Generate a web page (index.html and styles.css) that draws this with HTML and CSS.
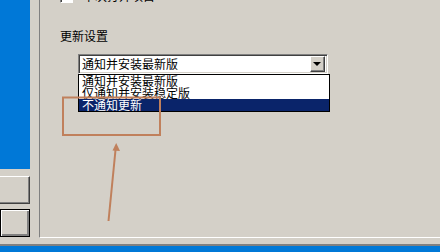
FILE: index.html
```html
<!DOCTYPE html>
<html lang="zh">
<head>
  <meta charset="UTF-8">
  <title>更新设置</title>
  <link rel="stylesheet" href="styles.css">
</head>
<body>
  <div class="window">
    <div class="top">
      <div class="side">
        <div class="side-blue"></div>
        <div class="btn"></div>
        <div class="btn btn-default"></div>
      </div>
      <div class="panel">
        <div class="check-row">
          <span class="check"></span>
          <span>下次打开项目</span>
        </div>
        <div class="label">更新设置</div>
        <div class="combo">
          <div class="combo-text">通知并安装最新版</div>
          <div class="combo-btn"><span class="tri"></span></div>
        </div>
        <ul class="list">
          <li>通知并安装最新版</li>
          <li>仅通知并安装稳定版</li>
          <li class="sel">不通知更新</li>
        </ul>
      </div>
    </div>
    <div class="bottom"></div>
    <div class="taskbar"></div>

    <!-- 标注 -->
    <svg class="mark" width="440" height="252" viewBox="0 0 440 252">
      <rect x="63" y="97.5" width="97" height="37.5" fill="none" stroke="#c0805c" stroke-width="2"/>
      <line x1="108.5" y1="221" x2="115.5" y2="150" stroke="#c0805c" stroke-width="2"/>
      <path d="M116.2 143 L120 151 L112.5 150.5 Z" fill="#c0805c"/>
    </svg>
  </div>
</body>
</html>
```

FILE: styles.css
```css
* { box-sizing: border-box; }
body { margin: 0; background: #d4d0c8; font: 12px "Noto Sans CJK SC", "Liberation Sans", sans-serif; }

.window { position: relative; width: 440px; height: 252px; overflow: hidden; display: flex; flex-direction: column; }

.top { display: flex; height: 238px; }

.side { width: 30px; margin-right: 9px; display: flex; flex-direction: column; }
.side-blue { height: 169px; background: #0078d7; }
.btn {
  height: 28px; margin-top: 7px;
  border-top: 1px solid #fff;
  border-right: 1px solid #404040;
  border-bottom: 1px solid #404040;
  box-shadow: inset -1px -1px 0 #808080;
}
.btn-default { margin-top: 5px; border: 1px solid #000; box-shadow: inset 1px 1px 0 #fff, inset -2px -2px 0 #808080; }

.panel {
  flex: 1;
  border-left: 1px solid #808080;
  border-bottom: 1px solid #fff;
  padding-left: 20px;
}

.check-row { display: flex; align-items: center; gap: 10px; height: 16px; margin-top: -12px; line-height: 16px; }
.check { width: 13px; height: 13px; background: #fff; border-top: 1px solid #808080; border-left: 1px solid #808080; border-right: 1px solid #fff; border-bottom: 1px solid #fff; box-shadow: inset 1px 1px 0 #404040; }

.label { margin-top: 25px; line-height: 14px; height: 14px; }

.combo {
  display: flex; width: 250px; height: 20px; margin: 11px 0 0 18px;
  background: #fff;
  border-top: 1px solid #808080; border-left: 1px solid #808080;
  border-right: 1px solid #fff; border-bottom: 1px solid #fff;
  box-shadow: inset 1px 1px 0 #404040, inset -1px -1px 0 #d4d0c8;
}
.combo-text { flex: 1; padding: 2px 0 0 3px; line-height: 14px; }
.combo-btn {
  width: 15px; height: 16px; margin: 1px 2px 0 0;
  background: #d4d0c8;
  border-top: 1px solid #fff; border-left: 1px solid #fff;
  border-right: 1px solid #404040; border-bottom: 1px solid #404040;
  box-shadow: inset -1px -1px 0 #808080;
  display: flex; align-items: center; justify-content: center;
}
.tri { width: 0; height: 0; border-left: 4px solid transparent; border-right: 4px solid transparent; border-top: 4px solid #000; margin: 0 1px 1px 0; }

.list {
  list-style: none; margin: 0 0 0 18px; padding: 0;
  width: 252px; height: 38px;
  background: #fff; border: 1px solid #000;
}
.list li { height: 12px; line-height: 12px; padding-left: 3px; white-space: nowrap; }
.list .sel { background: #0a246a; color: #fff; }

.bottom { height: 8px; border-bottom: 2px solid #808080; }
.taskbar { flex: 1; background: #0078d7; }

.mark { position: absolute; left: 0; top: 0; pointer-events: none; }
```
